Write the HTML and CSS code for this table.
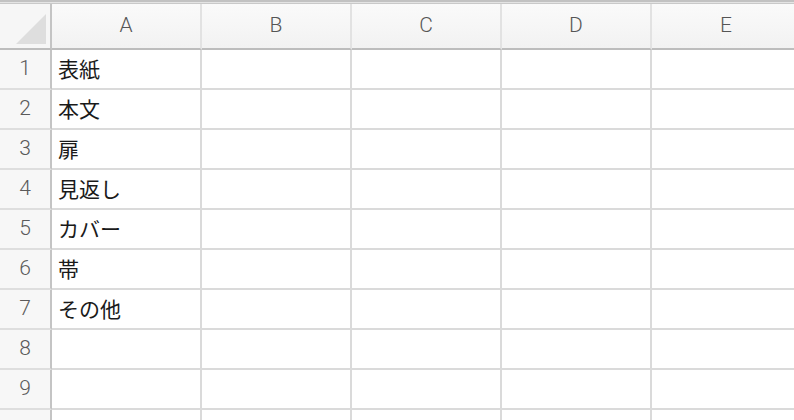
FILE: index.html
```html
<!DOCTYPE html>
<html lang="ja">
<head>
<meta charset="utf-8">
<link rel="stylesheet" href="styles.css">
</head>
<body>
<div class="sheet">
  <div class="topbar"></div>
  <div class="grid">
    <div class="corner"><span class="tri"></span></div>
    <div class="colhead">A</div>
    <div class="colhead">B</div>
    <div class="colhead">C</div>
    <div class="colhead">D</div>
    <div class="colhead">E</div>

    <div class="rowhead">1</div><div class="cell">表紙</div><div class="cell"></div><div class="cell"></div><div class="cell"></div><div class="cell"></div>
    <div class="rowhead">2</div><div class="cell">本文</div><div class="cell"></div><div class="cell"></div><div class="cell"></div><div class="cell"></div>
    <div class="rowhead">3</div><div class="cell">扉</div><div class="cell"></div><div class="cell"></div><div class="cell"></div><div class="cell"></div>
    <div class="rowhead">4</div><div class="cell">見返し</div><div class="cell"></div><div class="cell"></div><div class="cell"></div><div class="cell"></div>
    <div class="rowhead">5</div><div class="cell">カバー</div><div class="cell"></div><div class="cell"></div><div class="cell"></div><div class="cell"></div>
    <div class="rowhead">6</div><div class="cell">帯</div><div class="cell"></div><div class="cell"></div><div class="cell"></div><div class="cell"></div>
    <div class="rowhead">7</div><div class="cell">その他</div><div class="cell"></div><div class="cell"></div><div class="cell"></div><div class="cell"></div>
    <div class="rowhead">8</div><div class="cell"></div><div class="cell"></div><div class="cell"></div><div class="cell"></div><div class="cell"></div>
    <div class="rowhead">9</div><div class="cell"></div><div class="cell"></div><div class="cell"></div><div class="cell"></div><div class="cell"></div>
    <div class="rowhead">10</div><div class="cell"></div><div class="cell"></div><div class="cell"></div><div class="cell"></div><div class="cell"></div>
  </div>
</div>
</body>
</html>
```

FILE: styles.css
```css
html, body {
  margin: 0;
  padding: 0;
  background: #ffffff;
}

.sheet {
  width: 794px;
  height: 420px;
  overflow: hidden;
}

.topbar {
  height: 2px;
  background: #c2c2c2;
  border-bottom: 1px solid #e4e4e4;
  box-shadow: 0 1px 0 #c9c9c9;
  margin-bottom: 1px;
}

.grid {
  display: grid;
  grid-template-columns: 52px repeat(5, 150px);
  grid-template-rows: 46px repeat(10, 40px);
  width: 802px;
}

.corner {
  background: #f6f6f6;
  border-right: 2px solid #c4c4c4;
  border-bottom: 2px solid #bdbdbd;
  position: relative;
}

.tri {
  position: absolute;
  left: 16px;
  top: 10px;
  width: 30px;
  height: 30px;
  background: #dedede;
  clip-path: polygon(100% 0, 100% 100%, 0 100%);
}

.colhead {
  background: linear-gradient(#fafafa, #f2f2f2);
  border-right: 2px solid #e2e2e2;
  border-bottom: 2px solid #bdbdbd;
  display: flex;
  align-items: center;
  justify-content: center;
  font-family: Roboto, "Liberation Sans", sans-serif;
  font-size: 21px;
  font-weight: 300;
  color: #555555;
  padding-bottom: 2px;
  box-sizing: border-box;
}

.rowhead {
  background: #f7f7f7;
  border-right: 2px solid #c4c4c4;
  border-bottom: 2px solid #dedede;
  display: flex;
  align-items: center;
  justify-content: center;
  padding-bottom: 2px;
  box-sizing: border-box;
  font-family: Roboto, "Liberation Sans", sans-serif;
  font-size: 21px;
  font-weight: 300;
  color: #5a5a5a;
}

.cell {
  border-right: 2px solid #dadada;
  border-bottom: 2px solid #dadada;
  display: flex;
  align-items: center;
  padding-left: 6px;
  padding-bottom: 2px;
  box-sizing: border-box;
  font-family: "Noto Sans CJK JP", "Noto Sans", sans-serif;
  font-size: 21px;
  color: #1a1a1a;
  white-space: nowrap;
}
```
